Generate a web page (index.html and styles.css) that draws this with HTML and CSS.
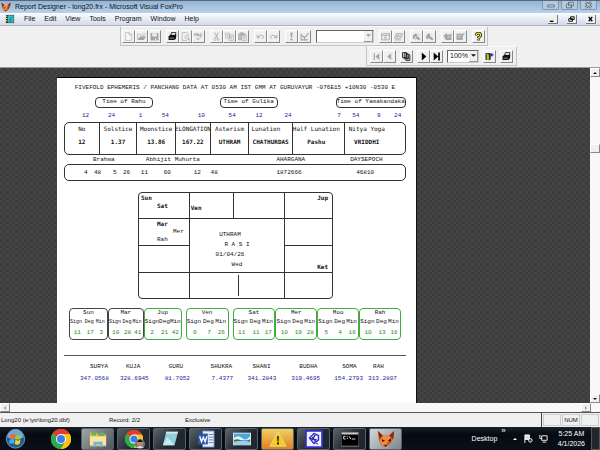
FILE: index.html
```html
<!DOCTYPE html>
<html lang="en">
<head>
    <meta charset="UTF-8">
    <meta name="viewport" content="width=device-width, initial-scale=1.0">
    <title>Report Designer - long20.frx - Microsoft Visual FoxPro</title>
    <link rel="stylesheet" href="styles.css">
</head>
<body>

<!-- shared icons -->
<svg class="defs" aria-hidden="true">
    <symbol id="fox" viewBox="0 0 20 20">
        <path d="M1 1l6 5h6l6-5-1 9-3 5-5 4-5-2-3-6z" fill="#d4581c"/>
        <path d="M1 1l5 5-3 4zM19 1l-5 5 4 4z" fill="#7c2a0c"/>
        <path d="M7 6h6l4 5-5 2-3 5-4-2-2-5z" fill="#f08a3c"/>
        <path d="M5 10l4 2-3 1zM16 9l-4 3 3 1zM8 16l3 1-2 2z" fill="#301008"/>
    </symbol>
    <symbol id="chrome" viewBox="0 0 20 20">
        <circle cx="10" cy="10" r="10" fill="#fbc116"/>
        <path d="M10 10L1.3 5A10 10 0 0 1 18.7 5z" fill="#e33b2e"/>
        <path d="M10 10L1.3 5A10 10 0 0 0 10 20l4.500-7.500z" fill="#2da94f"/>
        <path d="M10 5h8.700A10 10 0 0 1 10 20l4.500-8z" fill="#fbc116"/>
        <circle cx="10" cy="10" r="5" fill="#fff"/>
        <circle cx="10" cy="10" r="4" fill="#3b7ded"/>
    </symbol>
    <symbol id="printer" viewBox="0 0 16 16">
        <path d="M5 6l1-5h8l-1 5" fill="#fff" stroke="currentColor" stroke-width="1.500"/>
        <path d="M1 8l3-3h11l-1 7-3 2H1z" fill="currentColor"/>
        <path d="M3 11h8M7 3h5" stroke="#ddd"/>
    </symbol>
    <symbol id="down" viewBox="0 0 8 8"><path d="M0 2h8L4 6z" fill="currentColor"/></symbol>
</svg>

<header class="titlebar">
    <svg class="app-icon"><use href="#fox"/></svg>
    <h1>Report Designer - long20.frx - Microsoft Visual FoxPro</h1>
    <div class="window-buttons">
        <button aria-label="Minimize"><svg viewBox="0 0 16 8"><path d="M5 4h7v2H5z" fill="#fff" stroke="#56687c"/></svg></button>
        <button aria-label="Restore"><svg viewBox="0 0 16 8"><path d="M7 1h5v4H7zM5 3h5v4H5z" fill="#e8eef5" stroke="#56687c"/></svg></button>
        <button aria-label="Close"><svg viewBox="0 0 16 8"><path d="M5 1l6 6M11 1L5 7" stroke="#56687c" stroke-width="3"/><path d="M5 1l6 6M11 1L5 7" stroke="#fff"/></svg></button>
    </div>
</header>

<nav class="menubar">
    <svg class="doc-icon" viewBox="0 0 22 22"><path d="M2 2h18v18H2z" fill="#2a2a2a"/><path d="M6 3h13v16H6z" fill="#35c4c8"/><path d="M2 4h3v2H2zM2 9h3v2H2zM2 14h3v2H2z" fill="#f0e040"/><path d="M9 7l3 3 4-4M9 13h7M9 16h5" stroke="#135" fill="none"/></svg>
    <button>File</button>
    <button>Edit</button>
    <button>View</button>
    <button>Tools</button>
    <button>Program</button>
    <button>Window</button>
    <button>Help</button>
    <div class="child-buttons">
        <button aria-label="Minimize report"><svg viewBox="0 0 10 9"><path d="M2 7h4" stroke="#000" stroke-width="1.500"/></svg></button>
        <button aria-label="Restore report"><svg viewBox="0 0 10 9"><path d="M4 2h4v3H4zM2 4h4v3H2z" fill="#eee" stroke="#000"/></svg></button>
        <button aria-label="Close report"><svg viewBox="0 0 10 9"><path d="M3 2l4 5M7 2L3 7" stroke="#000" stroke-width="1.500"/></svg></button>
    </div>
</nav>

<div class="toolbars">
    <div class="toolbar standard">
        <div class="group">
            <button disabled aria-label="New"><svg viewBox="0 0 16 16"><path d="M3 1h6l4 4v10H3zM9 1v4h4" fill="#f8f8f8" stroke="currentColor"/></svg></button>
            <button disabled aria-label="Open"><svg viewBox="0 0 16 16"><path d="M1 14V4h5l1 2h6v3M10 3q3-2 5 1" fill="none" stroke="currentColor"/><path d="M1 14l4-6h11l-4 6z" fill="currentColor"/></svg></button>
            <button disabled aria-label="Save"><svg viewBox="0 0 16 16"><path d="M1 2h14v13H1z" fill="currentColor"/><path d="M4 2h8v6H4zM9 11h2v4H9z" fill="#eee"/></svg></button>
        </div>
        <div class="group">
            <button aria-label="Print"><svg><use href="#printer"/></svg></button>
            <button disabled aria-label="Print Preview"><svg viewBox="0 0 16 16"><path d="M2 1h8l3 3v3M2 1v14h9" fill="none" stroke="currentColor"/><circle cx="10" cy="9" r="3" fill="none" stroke="currentColor"/><path d="M12 11l4 4" stroke="currentColor" stroke-width="2"/></svg></button>
            <button disabled aria-label="Spelling"><svg viewBox="0 0 16 16"><path d="M1 7V3h3v4M6 2v5h3V4H6M14 3h-3v4h3M4 10l3 4 8-9" fill="none" stroke="currentColor" stroke-width="1.500"/></svg></button>
        </div>
        <div class="group">
            <button disabled aria-label="Cut"><svg viewBox="0 0 16 16"><path d="M5 1l5 10M11 1L6 11" stroke="currentColor" stroke-width="1.500"/><circle cx="5" cy="13" r="2" fill="none" stroke="currentColor"/><circle cx="11" cy="13" r="2" fill="none" stroke="currentColor"/></svg></button>
            <button disabled aria-label="Copy"><svg viewBox="0 0 16 16"><path d="M1 2h7v9H1zM7 5h8v10H7zM9 8h4M9 10h4M9 12h4M3 5h3M3 7h3" fill="#eee" stroke="currentColor"/></svg></button>
            <button disabled aria-label="Paste"><svg viewBox="0 0 16 16"><path d="M1 3h12v11H1zM5 1h4v3H5z" fill="#bbb" stroke="currentColor"/><path d="M7 7h8v8H7zM9 10h4M9 12h4" fill="#eee" stroke="currentColor"/></svg></button>
        </div>
        <div class="group">
            <button disabled aria-label="Undo"><svg viewBox="0 0 16 16"><path d="M2 5v5h5M3 9q5-6 9-2 3 3-1 5" fill="none" stroke="currentColor" stroke-width="1.500"/></svg></button>
            <button disabled aria-label="Redo"><svg viewBox="0 0 16 16"><path d="M14 5v5H9M13 9Q8 3 4 7q-3 3 1 5" fill="none" stroke="currentColor" stroke-width="1.500"/></svg></button>
        </div>
        <div class="group">
            <button disabled aria-label="Run"><svg viewBox="0 0 16 16"><path d="M6 1h4l-1 9H7zM6 12h4v3H6z" fill="currentColor"/></svg></button>
            <button disabled aria-label="Modify Form"><svg viewBox="0 0 16 16"><path d="M2 3v11h12M3 5l5 6 7-9M8 14V8" fill="none" stroke="currentColor" stroke-width="2"/></svg></button>
        </div>
        <div class="combo database">
            <select disabled aria-label="Database"><option></option></select>
            <span class="arrow"><svg><use href="#down"/></svg></span>
        </div>
        <div class="group">
            <button disabled aria-label="Command Window"><svg viewBox="0 0 16 16"><path d="M1 3h14v11H1zM1 6h14M6 9h4M6 11h4" fill="none" stroke="currentColor" stroke-width="1.500"/></svg></button>
            <button disabled aria-label="Data Session"><svg viewBox="0 0 16 16"><path d="M4 3h11l-3 8H1zM3 7h10M2 14h10M8 4l-2 6" fill="none" stroke="currentColor" stroke-width="1.500"/></svg></button>
        </div>
        <div class="group">
            <button disabled aria-label="Form Wizard"><svg viewBox="0 0 16 16"><path d="M1 7l5-5 3 2v3l6 5-2 3-5-3H2z" fill="currentColor"/><path d="M4 8h4v4H4zM10 3l4 4" fill="#ddd" stroke="currentColor"/></svg></button>
            <button disabled aria-label="Report Wizard"><svg viewBox="0 0 16 16"><path d="M2 7l4-5 3 2v3l6 5-2 3-5-3H2z" fill="currentColor"/><path d="M5 8l4 4M10 3l4 4" stroke="#ddd"/></svg></button>
        </div>
        <div class="group">
            <button disabled aria-label="AutoForm"><svg viewBox="0 0 16 16"><path d="M1 6l5-4 2 3 7-2v11H5L3 10z" fill="currentColor"/><path d="M8 7h5M8 10h5" stroke="#eee"/></svg></button>
            <button disabled aria-label="AutoReport"><svg viewBox="0 0 16 16"><path d="M1 3h11v11H1z" fill="currentColor"/><path d="M3 6h6M3 9h6M9 8l6-6" stroke="#eee"/><path d="M8 10l7-8" stroke="currentColor" stroke-width="2"/></svg></button>
        </div>
        <div class="group">
            <button aria-label="Help"><svg viewBox="0 0 16 16"><path d="M4 6q0-4 4-4t4 4q0 2-4 4v1M8 13v2" fill="none" stroke="#222" stroke-width="5"/><path d="M4 6q0-4 4-4t4 4q0 2-4 4v1M8 13v2" fill="none" stroke="#e8e020" stroke-width="2"/></svg></button>
        </div>
    </div>
    <div class="toolbar preview">
        <div class="group">
            <button disabled aria-label="First Page"><svg viewBox="0 0 16 16"><path d="M3 2h2v12H3zM13 2v12L6 8z" fill="currentColor"/></svg></button>
            <button disabled aria-label="Previous Page"><svg viewBox="0 0 16 16"><path d="M11 2v12L4 8z" fill="currentColor"/></svg></button>
        </div>
        <div class="group">
            <button aria-label="Go To Page"><svg viewBox="0 0 16 16"><path d="M1 1h7v9H1zM4 3h7v9H4zM7 5h7v10H7zM9 9h4M9 12h4" fill="#fff" stroke="#111" stroke-width="1.500"/></svg></button>
        </div>
        <div class="group">
            <button aria-label="Next Page"><svg viewBox="0 0 16 16"><path d="M5 1v14l8-7z"/></svg></button>
            <button aria-label="Last Page"><svg viewBox="0 0 16 16"><path d="M3 1v14l8-7zM11 1h3v14h-3z"/></svg></button>
        </div>
        <div class="combo zoom">
            <select aria-label="Zoom"><option>100%</option></select>
            <span class="arrow"><svg><use href="#down"/></svg></span>
        </div>
        <div class="group">
            <button aria-label="Close Preview"><svg viewBox="0 0 16 16"><path d="M1 2h9v12H1z" fill="#222"/><path d="M3 2l4 3v11l-4-3z" fill="#c8c030"/><path d="M9 5h6M12 2v6" stroke="#22a" stroke-width="2"/></svg></button>
        </div>
        <div class="group">
            <button aria-label="Print Report"><svg><use href="#printer"/></svg></button>
        </div>
    </div>
</div>

<main class="workspace">
    <article class="paper">
        <h2>FIVEFOLD EPHEMERIS / PANCHANG DATA AT 0530 AM IST GMM AT GURUVAYUR -076E15 +10N30 -0530 E</h2>

        <div class="periods">
            <span>Time of Rahu</span>
            <span>Time of Gulika</span>
            <span>Time of Yamakandaka</span>
        </div>
        <div class="line period-times">
            <span>12</span><span>24</span><span>1</span><span>54</span>
            <span>10</span><span>54</span><span>12</span><span>24</span>
            <span>7</span><span>54</span><span>9</span><span>24</span>
        </div>

        <dl class="panchang">
            <div><dt>No</dt><dd>12</dd></div>
            <div><dt>Solstice</dt><dd>1.37</dd></div>
            <div><dt>Moonstice</dt><dd>13.86</dd></div>
            <div class="elongation"><dt>ELONGATION</dt><dd>167.22</dd></div>
            <div><dt>Asterism</dt><dd>UTHRAM</dd></div>
            <div class="lunation"><dt>Lunation</dt><dd>CHATHURDAS</dd></div>
            <div class="half"><dt>Half Lunation</dt><dd>Pashu</dd></div>
            <div class="yoga"><dt>Nitya Yoga</dt><dd>VRIDDHI</dd></div>
        </dl>

        <div class="line muhurta-names">
            <span>Brahma</span><span>Abhijit Muhurta</span><span>AHARGANA</span><span>DAYSEPOCH</span>
        </div>
        <div class="line muhurta">
            <span>4</span><span>48</span><span>5</span><span>26</span><span>11</span>
            <span>60</span><span>12</span><span>48</span><span>1872666</span><span>46810</span>
        </div>

        <section class="rasi">
            <div class="house"><b>Sun</b><b class="inner">Sat</b></div>
            <div class="house low"><b>Ven</b></div>
            <div class="house"></div>
            <div class="house east"><b>Jup</b></div>
            <div class="house"><b class="inner">Mar</b><span class="far">Mer</span><span class="inner">Rah</span></div>
            <div class="center">
                <span>UTHRAM</span>
                <span class="name">R A S I</span>
                <span>01/04/26</span>
                <span class="name">Wed</span>
            </div>
            <div class="house east"></div>
            <div class="house"></div>
            <div class="house east bottom"><b>Ket</b></div>
            <div class="house"></div>
            <div class="house split"><i></i></div>
            <div class="house east"></div>
        </section>

        <section class="planets">
            <div class="planet dark"><table><caption>Sun</caption><tr><th>Sign</th><th>Deg</th><th>Min</th></tr><tr><td>11</td><td>17</td><td>3</td></tr></table></div>
            <div class="planet dark"><table><caption>Mar</caption><tr><th>Sign</th><th>Deg</th><th>Min</th></tr><tr><td>10</td><td>28</td><td>41</td></tr></table></div>
            <div class="planet spaced"><table><caption>Jup</caption><tr><th>Sign</th><th>Deg</th><th>Min</th></tr><tr><td>2</td><td>21</td><td>42</td></tr></table></div>
            <div class="planet spaced"><table><caption>Ven</caption><tr><th>Sign</th><th>Deg</th><th>Min</th></tr><tr><td>0</td><td>7</td><td>26</td></tr></table></div>
            <div class="planet"><table><caption>Sat</caption><tr><th>Sign</th><th>Deg</th><th>Min</th></tr><tr><td>11</td><td>11</td><td>17</td></tr></table></div>
            <div class="planet"><table><caption>Mer</caption><tr><th>Sign</th><th>Deg</th><th>Min</th></tr><tr><td>10</td><td>19</td><td>28</td></tr></table></div>
            <div class="planet"><table><caption>Moo</caption><tr><th>Sign</th><th>Deg</th><th>Min</th></tr><tr><td>5</td><td>4</td><td>16</td></tr></table></div>
            <div class="planet"><table><caption>Rah</caption><tr><th>Sign</th><th>Deg</th><th>Min</th></tr><tr><td>10</td><td>13</td><td>16</td></tr></table></div>
        </section>

        <hr>
        <div class="line graha-names">
            <span>SURYA</span><span>KUJA</span><span>GURU</span><span>SHUKRA</span>
            <span>SHANI</span><span>BUDHA</span><span>SOMA</span><span>RAH</span>
        </div>
        <div class="line graha-values">
            <span>347.0568</span><span>328.6945</span><span>81.7052</span><span>7.4377</span>
            <span>341.2843</span><span>319.4695</span><span>154.2793</span><span>313.2807</span>
        </div>
    </article>
    <div class="vscroll">
        <button aria-label="Scroll up"><svg class="up"><use href="#down"/></svg></button>
        <div class="thumb"></div>
        <button aria-label="Scroll down"><svg><use href="#down"/></svg></button>
    </div>
</main>

<div class="hscroll">
    <button aria-label="Scroll left"><svg class="left"><use href="#down"/></svg></button>
    <button aria-label="Scroll right"><svg class="right"><use href="#down"/></svg></button>
</div>

<div class="statusbar">
    <span class="file">Long20 (e:\ytr\long20.dbf)</span>
    <span class="record">Record: 2/2</span>
    <span>Exclusive</span>
    <div class="keys"><span></span><span>NUM</span><span></span></div>
</div>

<footer class="taskbar">
    <button class="start" aria-label="Start"><svg viewBox="0 0 24 24">
        <circle cx="12" cy="12" r="11" fill="#1e5c92" stroke="#6fa5c8"/>
        <path d="M2 10a10 10 0 0 1 20 0q-10 5-20 0z" fill="#6fa9cf"/>
        <path d="M6 7q3-2 6 0l-1 5q-3-2-6 0z" fill="#ee6a2c"/>
        <path d="M13 7q3 2 6 0l-1 5q-3 2-6 0z" fill="#9ccc3c"/>
        <path d="M5 13q3-2 6 0l-1 5q-3-2-6 0z" fill="#4aa8ee"/>
        <path d="M12 13q3 2 6 0l-1 5q-3 2-6 0z" fill="#fcd034"/>
    </svg></button>
    <span class="grip"></span>
    <button class="pinned" aria-label="Chrome"><svg><use href="#chrome"/></svg></button>
    <div class="tasks">
        <button class="explorer" aria-label="Explorer"><svg viewBox="0 0 20 20"><path d="M1 3h8l1 2h9v13H1z" fill="#e2b850"/><path d="M3 2h5v4H3zM11 3h6v4h-6z" fill="#6fae58"/><path d="M1 7h18v10H1z" fill="#f8e6a0"/><path d="M5 19v-6h10v6h-3v-3H8v3z" fill="#74b4dc"/></svg></button>
        <button aria-label="Chrome profile"><svg><use href="#chrome"/></svg><svg class="avatar" viewBox="0 0 10 10"><circle cx="5" cy="5" r="5" fill="#777"/><circle cx="5" cy="4" r="3" fill="#b98870"/><path d="M2 3q3-5 6 0z" fill="#111"/><path d="M1 9q4-4 8 0z" fill="#ddd"/></svg></button>
        <button aria-label="Notepad"><svg viewBox="0 0 20 20"><path d="M6 2h13l-4 15H2z" fill="#8fd0dc"/><path d="M6 2h13l-1 2H5z" fill="#dce8e8"/><path d="M2 17l5-9 8 9z" fill="#c4ecf0"/></svg></button>
        <button aria-label="Word"><svg viewBox="0 0 20 20"><path d="M6 1h13v18H6z" fill="#e9f0fa" stroke="#5078b8"/><path d="M13 5h5M13 8h5M13 11h5M13 14h5" stroke="#5078b8"/><path d="M1 4h11v12H1z" fill="#2c58a8"/><path d="M3 7l2 6 2-5 2 5 2-6" fill="none" stroke="#fff" stroke-width="1.500"/></svg></button>
        <button aria-label="Pictures"><svg viewBox="0 0 20 20"><path d="M0 3h20v14H0z" fill="#dfeaf2"/><path d="M1 4h18v12H1z" fill="#4ca4dc"/><path d="M1 9q5-4 9 0t9-2v4H1z" fill="#e4f2fa"/><path d="M1 11q5-2 9 1t9-2v4H1z" fill="#38783c"/><path d="M1 13q9-2 18 0v3H1z" fill="#9cd0e8"/></svg></button>
        <button class="alert" aria-label="Warning"><svg viewBox="0 0 20 20"><path d="M10 2l9 16H1z" fill="#f8cc10" stroke="#d8d8c0"/><path d="M9 7h2l-.500 6h-1zM9 14h2v2H9z" fill="#111"/></svg></button>
        <button aria-label="Designer"><svg viewBox="0 0 20 20"><path d="M1 1h18v18H1z" fill="#f0f0ff" stroke="#3030c0" stroke-width="2"/><path d="M5 9l5-5 5 2v5l-5 4zM8 8l6 8M5 9l8 2M12 4l-4 7" fill="none" stroke="#3030c0" stroke-width="1.500"/></svg></button>
        <button aria-label="Command Prompt"><svg viewBox="0 0 20 20"><path d="M0 3h20v15H0z" fill="#000" stroke="#888"/><path d="M1 3h18v2H1z" fill="#ccc"/><path d="M5 7H3v3h2M7 7v1M7 9v1M9 7l2 3M12 10h4" fill="none" stroke="#eee"/></svg></button>
        <button class="active" aria-label="Visual FoxPro"><svg><use href="#fox"/></svg></button>
    </div>
    <div class="tray">
        <span class="grip"></span>
        <span>Desktop</span>
        <span class="more">»</span>
        <svg class="caret up"><use href="#down"/></svg>
        <svg class="tray-icon" viewBox="0 0 10 10"><path d="M1 1v9M1 1h5v5H1" stroke="#fff" fill="#ddd"/><circle cx="7" cy="7" r="2" fill="#333" stroke="#fff"/></svg>
        <svg class="tray-icon" viewBox="0 0 10 10"><path d="M3 2h6v5H3zM1 1v4h2M4 9h4" stroke="#fff" fill="none"/></svg>
        <time datetime="2026-04-01T05:25">5:25 AM<br>4/1/2026</time>
        <button class="show-desktop" aria-label="Show desktop"></button>
    </div>
</footer>

</body>
</html>
```
FILE: styles.css
```css
* {
    box-sizing: border-box;
}
body {
    margin: 0;
    height: 100vh;
    display: flex;
    flex-direction: column;
    overflow: hidden;
    background: #f0f0f0;
    color: #111;
    font: 7px/8px "Liberation Sans", sans-serif;
    white-space: nowrap;
}
button, select {
    margin: 0;
    padding: 0;
    border: none;
    background: none;
    color: inherit;
    font: inherit;
}
h1, h2, dl, dd {
    margin: 0;
    font: inherit;
}
svg {
    display: block;
}
.defs {
    display: none;
}
.up {
    transform: rotate(180deg);
}
.left {
    transform: rotate(90deg);
}
.right {
    transform: rotate(-90deg);
}

/* title and menu */
.titlebar {
    display: flex;
    align-items: center;
    gap: 4px;
    height: 13px;
    padding-left: 1px;
    border-top: 1px solid #566a7c;
    background: linear-gradient(#93b4d6, #b9d1ea);
}
.app-icon {
    width: 10px;
    height: 10px;
}
.window-buttons {
    display: flex;
    align-self: flex-start;
    gap: 2px;
    margin-left: auto;
    padding-right: 3px;
}
.window-buttons button {
    width: 17px;
    height: 9px;
    border: 1px solid #8499b0;
    border-top: none;
    border-radius: 0 0 2px 2px;
    background: #b3c9e0;
}
.window-buttons svg {
    width: 15px;
    height: 8px;
}
.menubar {
    display: flex;
    align-items: center;
    gap: 9px;
    height: 12px;
    padding: 0 4px 0 5px;
    background: linear-gradient(#fbfcfe, #d3daee);
}
.doc-icon {
    width: 10px;
    height: 10px;
}
.child-buttons {
    display: flex;
    gap: 9px;
    margin-left: auto;
}
.child-buttons button {
    width: 10px;
    height: 9px;
    background: #f0f0f0;
    border-right: 1px solid #777;
    border-bottom: 1px solid #777;
}

/* toolbars */
.toolbars {
    border-top: 1px solid #b4b4b4;
    padding-bottom: 1px;
}
.toolbar {
    display: flex;
    align-items: center;
    width: max-content;
    height: 20px;
    border: 1px solid #c4c4c4;
    border-top-color: #fafafa;
}
.standard {
    margin-left: 120px;
    padding: 0 2px 0 1px;
    gap: 5px;
}
.preview {
    margin-left: 366px;
    padding: 0 3px;
    gap: 4px;
}
.group {
    display: flex;
}
.group button {
    width: 13px;
    height: 13px;
    padding: 1px;
    border: 1px solid #fff;
    border-right-color: #888;
    border-bottom-color: #888;
    background: #f0f0f0;
}
.group button:disabled {
    color: #a4a4a4;
}
.group svg {
    width: 9px;
    height: 9px;
}
.combo {
    display: flex;
    height: 13px;
    border: 1px solid #666;
    border-right-color: #ccc;
    border-bottom-color: #ccc;
    background: #fff;
}
.combo select {
    flex: 1;
    min-width: 0;
    appearance: none;
    padding-left: 2px;
}
.database {
    width: 58px;
    color: #999;
}
.zoom {
    width: 32px;
}
.arrow {
    display: flex;
    align-items: center;
    justify-content: center;
    width: 9px;
    border-right: 1px solid #999;
    border-bottom: 1px solid #999;
    background: #f0f0f0;
}
.arrow svg {
    width: 5px;
    height: 5px;
}

/* report preview */
.workspace {
    flex: 1;
    min-height: 0;
    display: flex;
    border-top: 1px solid #999;
    background: repeating-conic-gradient(#3c3c3c 0 25%, #444 0 50%) 0 0 / 6px 6px;
}
.paper {
    flex: 0 0 60%;
    margin: 9px auto 0 57px;
    padding: 6px 10px 0 7px;
    background: #fff;
    border-top: 1px solid #000;
    border-right: 1px solid #111;
    font-family: "Liberation Mono", monospace;
    font-size: 6px;
}
.paper h2 {
    text-align: center;
}
.line {
    display: grid;
}
.periods {
    display: grid;
    grid-template-columns: 58fr 67fr 58fr 58fr 69fr;
    margin: 5px 0 4px;
    padding-left: 31px;
}
.periods span {
    height: 11px;
    border: 1px solid #333;
    border-radius: 4px;
    text-align: center;
}
.periods span:nth-child(2) {
    grid-column: 3;
}
.periods span:nth-child(3) {
    grid-column: 5;
}
.period-times {
    grid-template-columns: 26fr 31fr 23fr 36fr 31fr 27fr 29fr 53fr 15fr 25fr 17fr 12fr;
    padding-left: 18px;
    color: #1c1c9c;
}
.panchang {
    display: grid;
    grid-template-columns: 34fr 38fr 39fr 35fr 39fr 44fr 52fr 62fr;
    margin: 2px 0 1px;
    border: 1px solid #333;
    border-radius: 5px;
    font-family: "DejaVu Sans Mono", monospace;
}
.panchang div {
    display: flex;
    flex-direction: column;
    align-items: center;
    gap: 5px;
    min-width: 0;
    padding: 2px 0 8px;
}
.panchang div + div {
    border-left: 1px solid #333;
}
.panchang dd {
    font-weight: bold;
}
.panchang .lunation dt {
    align-self: flex-start;
    padding-left: 2px;
}
.panchang .half {
    padding-right: 4px;
}
.panchang .yoga {
    padding-right: 16px;
}
.muhurta-names {
    grid-template-columns: 53fr 131fr 74fr 56fr;
    padding-left: 29px;
}
.muhurta {
    grid-template-columns: 10fr 19fr 10fr 18fr 23fr 30fr 17fr 66fr 80fr 49fr;
    padding: 4px 0 3px 19px;
    border: 1px solid #333;
    border-radius: 5px;
}

/* rasi chart */
.rasi {
    display: grid;
    grid-template-columns: 51fr 44fr 52fr 47fr;
    grid-template-rows: 26px 27px 27px 25px;
    margin: 11px 73px 9px 74px;
    border: 1px solid #333;
    border-radius: 4px;
}
.rasi b {
    font-family: "DejaVu Sans Mono", monospace;
}
.house {
    display: flex;
    flex-direction: column;
    min-width: 0;
    padding: 1px 2px;
    border-right: 1px solid #333;
    border-bottom: 1px solid #333;
}
.rasi .inner {
    padding-left: 16px;
}
.rasi .far {
    padding-left: 32px;
}
.low {
    justify-content: flex-end;
    padding: 0 0 6px 1px;
}
.east {
    align-items: flex-end;
    padding-right: 4px;
    border-right: none;
}
.bottom {
    justify-content: flex-end;
}
.house:nth-last-child(-n+3) {
    border-bottom: none;
}
.center {
    grid-area: 2 / 2 / 4 / 4;
    display: flex;
    flex-direction: column;
    align-items: center;
    gap: 2px;
    padding: 12px 14px 0 0;
    border-right: 1px solid #333;
    border-bottom: 1px solid #333;
}
.name {
    padding-left: 14px;
}
.split {
    grid-column: 2 / 4;
    padding: 2px 0;
}
.split i {
    flex: 1;
    width: 52%;
    border-right: 1px solid #333;
}

/* planet boxes */
.planets {
    display: grid;
    grid-template-columns: 39fr 36fr 42fr 47fr 43fr 42fr 42fr 42fr;
    padding: 0 5px;
}
.planet {
    min-width: 0;
    padding-bottom: 2px;
    border: 1px solid #4a4;
    border-radius: 4px;
}
.dark {
    border-color: #444;
}
.spaced {
    margin-right: 4px;
}
.planet table {
    width: 100%;
    table-layout: fixed;
    border-spacing: 0;
}
.planet caption {
    padding-bottom: 1px;
}
.planet th, .planet td {
    padding: 0;
    font-weight: normal;
}
.planet th {
    padding-bottom: 3px;
    text-align: left;
}
.planet th:first-child {
    width: 40%;
}
.dark th {
    font-size: 5px;
}
.planet td {
    text-align: center;
    color: #1c8c1c;
}
hr {
    margin: 15px 0 7px;
    border: none;
    border-top: 1px solid #555;
}
.graha-names {
    grid-template-columns: 36fr 43fr 42fr 42fr 47fr 43fr 31fr 33fr;
    margin-bottom: 4px;
    padding-left: 26px;
}
.graha-values {
    grid-template-columns: 40fr 45fr 47fr 36fr 44fr 43fr 34fr 38fr;
    padding-left: 16px;
    color: #1c1c9c;
}
.line span {
    min-width: 0;
}

/* scroll bars and status */
.vscroll {
    display: flex;
    flex-direction: column;
    justify-content: space-between;
    width: 10px;
    background: #f8f8f8;
}
.vscroll button, .hscroll button, .thumb {
    display: flex;
    align-items: center;
    justify-content: center;
    width: 10px;
    height: 9px;
    border: 1px solid #fff;
    border-right-color: #888;
    border-bottom-color: #888;
    background: #f0f0f0;
}
.thumb {
    margin-bottom: 174px;
}
.vscroll svg, .hscroll svg {
    width: 4px;
    height: 4px;
}
.hscroll {
    display: flex;
    justify-content: space-between;
    padding-right: 9px;
    background: #f8f8f8;
    color: #999;
}
.statusbar {
    display: flex;
    align-items: center;
    height: 15px;
    padding-left: 1px;
    border-top: 1px solid #555;
    font-size: 6px;
}
.file {
    width: 108px;
}
.record {
    width: 76px;
}
.keys {
    display: flex;
    gap: 1px;
    align-self: stretch;
    margin-left: auto;
    padding: 1px;
    border-left: 1px solid #444;
}
.keys span {
    width: 18px;
    border: 1px solid #ccc;
    line-height: 11px;
    text-align: center;
}

/* taskbar */
.taskbar {
    display: flex;
    align-items: center;
    height: 23px;
    padding-left: 4px;
    background: linear-gradient(#1a222a, #060b12 30%, #0a1018);
    color: #fff;
}
.start svg {
    width: 23px;
    height: 23px;
}
.grip {
    width: 5px;
    height: 18px;
    margin-left: 7px;
    background: radial-gradient(#48505a 30%, transparent 40%) 0 0 / 2px 2px;
}
.pinned {
    margin: 0 10px 0 12px;
}
.taskbar button svg {
    height: 20px;
    margin: 0 auto;
}
.pinned svg {
    width: 20px;
}
.tasks {
    display: flex;
    gap: 3px;
}
.tasks button {
    position: relative;
    width: 33px;
    height: 22px;
    border: 1px solid #59626b;
    border-radius: 2px;
    background: linear-gradient(135deg, #5a626a, #20272e 60%);
}
.tasks .explorer {
    background: linear-gradient(135deg, #a0a5a8, #4c555c);
}
.tasks .alert {
    background: linear-gradient(#f0d060, #e08020);
}
.tasks .active {
    background: linear-gradient(135deg, #d4d8da, #7c858c);
}
.tasks svg {
    width: 18px;
    max-height: 18px;
}
.tasks .avatar {
    position: absolute;
    right: 4px;
    bottom: 0;
    width: 10px;
    height: 10px;
}
.tray {
    display: flex;
    align-items: center;
    gap: 4px;
    height: 100%;
    margin-left: auto;
}
.more {
    align-self: flex-start;
    font-size: 8px;
}
.caret {
    width: 4px;
    height: 4px;
    margin: 0 3px;
}
.tray-icon {
    width: 9px;
    height: 9px;
    margin-right: 2px;
}
time {
    margin-left: 4px;
    line-height: 10px;
    text-align: center;
}
.show-desktop {
    width: 9px;
    height: 100%;
    margin-left: 2px;
    border: 1px solid #555;
    background: #20262c;
}
```
